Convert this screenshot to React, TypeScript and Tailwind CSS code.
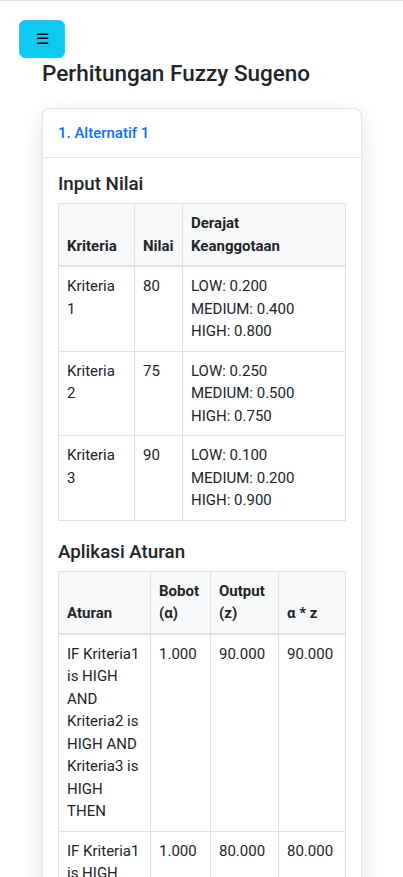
const criteria = [
    { name: 'Kriteria 1', value: 80, low: '0.200', medium: '0.400', high: '0.800' },
    { name: 'Kriteria 2', value: 75, low: '0.250', medium: '0.500', high: '0.750' },
    { name: 'Kriteria 3', value: 90, low: '0.100', medium: '0.200', high: '0.900' },
];

const rules = [
    { rule: 'IF Kriteria1 is HIGH AND Kriteria2 is HIGH AND Kriteria3 is HIGH THEN', alpha: '1.000', z: '90.000', az: '90.000' },
    { rule: 'IF Kriteria1 is HIGH AND Kriteria2 is HIGH AND Kriteria3 is MEDIUM THEN', alpha: '1.000', z: '80.000', az: '80.000' },
];

const th = 'border border-[#dee2e6] border-b-2 bg-[#f8f9fa] px-2 py-2 text-left align-bottom font-bold';
const td = 'border border-[#dee2e6] px-2 py-2 align-top';

export default function App() {
    return (
        <div
            className="min-h-screen border-t border-[#dcdde1] bg-white text-[#212529] text-[15px] leading-[1.5]"
            style={{ fontFamily: '"Segoe UI", Roboto, "Liberation Sans", sans-serif' }}
        >
            <button
                type="button"
                className="ml-[19px] mt-[19px] flex h-[38px] w-[46px] items-center justify-center rounded-md border border-[#25cff2] bg-[#0dcaf0] text-[15px] text-black"
            >
                ☰
            </button>

            <div className="pl-[42px] pr-[41px]">
                <h4 className="mt-[2px] mb-[21px] text-[22.5px] font-medium leading-[1.2]">
                    Perhitungan Fuzzy Sugeno
                </h4>

                <div className="rounded-lg border border-black/10 bg-white shadow-[0_8px_24px_rgba(0,0,0,0.12)]">
                    <div className="flex h-[49px] items-center border-b border-black/10 px-[15px]">
                        <span className="font-medium text-[#0d6efd]">1. Alternatif 1</span>
                    </div>

                    <div className="p-[15px]">
                        <h5 className="mb-[7.5px] text-[18.75px] font-medium leading-[1.2]">Input Nilai</h5>
                        <table className="mb-[20px] w-full table-fixed border-collapse">
                            <colgroup>
                                <col className="w-[76px]" />
                                <col className="w-[48px]" />
                                <col />
                            </colgroup>
                            <thead>
                                <tr>
                                    <th className={th}>Kriteria</th>
                                    <th className={th}>Nilai</th>
                                    <th className={th}>
                                        Derajat
                                        <br />
                                        Keanggotaan
                                    </th>
                                </tr>
                            </thead>
                            <tbody>
                                {criteria.map((c) => (
                                    <tr key={c.name}>
                                        <td className={td}>{c.name}</td>
                                        <td className={td}>{c.value}</td>
                                        <td className={td}>
                                            LOW: {c.low}
                                            <br />
                                            MEDIUM: {c.medium}
                                            <br />
                                            HIGH: {c.high}
                                        </td>
                                    </tr>
                                ))}
                            </tbody>
                        </table>

                        <h5 className="mb-[7.5px] text-[18.75px] font-medium leading-[1.2]">Aplikasi Aturan</h5>
                        <table className="w-full table-fixed border-collapse">
                            <colgroup>
                                <col className="w-[92px]" />
                                <col className="w-[60px]" />
                                <col className="w-[68px]" />
                                <col />
                            </colgroup>
                            <thead>
                                <tr>
                                    <th className={th}>Aturan</th>
                                    <th className={th}>Bobot (α)</th>
                                    <th className={th}>Output (z)</th>
                                    <th className={th}>α * z</th>
                                </tr>
                            </thead>
                            <tbody>
                                {rules.map((r, i) => (
                                    <tr key={i}>
                                        <td className={td}>{r.rule}</td>
                                        <td className={td}>{r.alpha}</td>
                                        <td className={td}>{r.z}</td>
                                        <td className={td}>{r.az}</td>
                                    </tr>
                                ))}
                            </tbody>
                        </table>
                    </div>
                </div>
            </div>
        </div>
    );
}
